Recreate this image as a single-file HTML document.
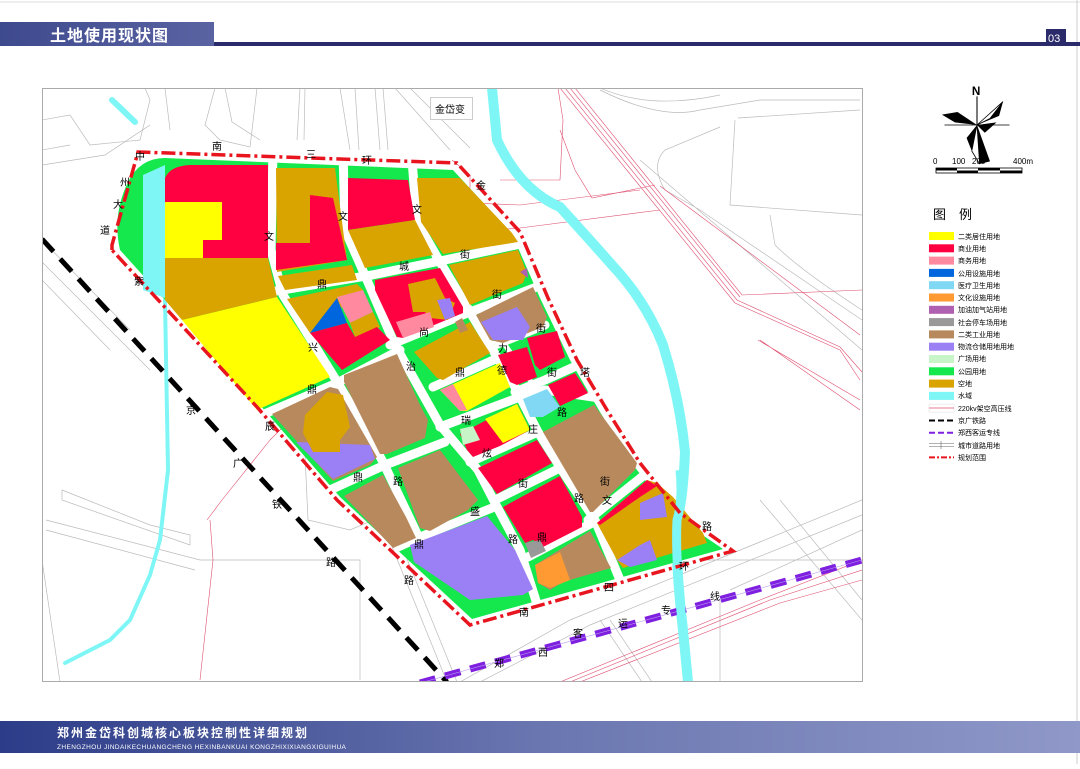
<!DOCTYPE html>
<html><head><meta charset="utf-8"><style>
html,body{margin:0;padding:0;background:#fff}
body{width:1080px;height:764px;overflow:hidden;position:relative;font-family:"Liberation Sans","Noto Sans CJK SC",sans-serif}
svg text{font-family:"Liberation Sans","Noto Sans CJK SC",sans-serif}
</style></head><body>
<svg width="1080" height="764" viewBox="0 0 1080 764" xmlns="http://www.w3.org/2000/svg">
<defs>
<linearGradient id="hd" x1="0" x2="1"><stop offset="0" stop-color="#3e4a8e"/><stop offset="1" stop-color="#5a63a2"/></linearGradient>
<linearGradient id="ft" x1="0" x2="1"><stop offset="0" stop-color="#2c3c88"/><stop offset="0.5" stop-color="#6a76b0"/><stop offset="1" stop-color="#8f98c8"/></linearGradient>
<clipPath id="mc"><rect x="43" y="89" width="819" height="592"/></clipPath>
</defs>
<line x1="0" y1="2" x2="1080" y2="2" stroke="#ddd" stroke-width="1"/>
<line x1="1077" y1="0" x2="1077" y2="764" stroke="#ccc" stroke-width="1"/>
<!-- header -->
<rect x="0" y="22" width="214" height="24" fill="url(#hd)"/>
<rect x="214" y="42" width="866" height="4" fill="#2b2b6b"/>
<text x="50" y="41" fill="#fff" font-size="16" font-weight="bold" letter-spacing="1">土地使用现状图</text>
<rect x="1046" y="29" width="20" height="16" fill="#2b2b6b"/>
<text x="1048" y="42" fill="#fff" font-size="11">03</text>

<!-- map frame -->
<rect x="42.5" y="88.5" width="820" height="593" fill="#fff" stroke="#aaa"/>
<g clip-path="url(#mc)">
<g fill="none" stroke="#bbb" stroke-width="0.7">
<path d="M42 120 L70 115 L90 145 L140 140 L150 100 L145 88"/>
<path d="M42 150 L70 145 M42 165 L105 155 L150 125"/>
<path d="M165 88 L170 130 M215 88 L205 125 L220 140 L250 147 L257 88 M225 88 L232 122 L260 140"/>
<path d="M300 88 L297 140 M305 88 L304 140 M340 88 L350 150 M355 88 L359 150 M375 88 L380 150 M383 88 L388 150"/>
<path d="M395 88 L450 150 M410 88 L470 148"/>
<path d="M600 90 Q660 120 700 110 L760 100 L860 100 M600 88 Q650 110 720 95 M735 120 L730 205 L862 215 M738 118 L860 110 M720 127 L665 150 Q650 165 665 190 L700 210 L862 320 M640 160 L862 350 M770 215 L775 245 Q800 270 862 310"/>
<path d="M42 240 L130 330 M42 262 L110 330 M42 280 L110 350"/>
<path d="M62 490 L150 525 L190 535 L190 545 L62 500 Z M46 520 L200 560 L360 560 L360 680 M46 530 L195 570 M305 455 L308 520 L350 530 L420 500 M110 330 L150 370"/>
<path d="M300 320 L447 682 M310 320 L457 682"/>
<path d="M460 682 L570 620 L862 500 M480 682 L590 625 L862 515 M600 620 L642 682 M610 620 L652 682 M700 560 L862 560 M720 600 L720 682 M730 590 L862 530"/>
<path d="M760 500 L862 620 M780 500 L862 600 M42 560 L60 682"/>
</g>
<g fill="none" stroke="#e05070" stroke-width="0.6">
<path d="M560 88 L735 303 L840 350 L860 380"/>
<path d="M565 88 L737 300 L840 347 L862 372"/>
<path d="M570 88 L740 297 M575 88 L742 295 L862 290"/>
<path d="M560 130 L575 170 L592 198 L655 185"/>
<path d="M660 186 L860 335 M760 340 L860 410 M758 340 L860 400"/>
<path d="M400 200 L520 205 L640 190 M430 235 L520 228 L660 210 M500 180 L560 180 L563 120 L558 88"/>
<path d="M270 440 L330 380 L380 290 L470 240 L470 175 L452 160"/>
<path d="M210 520 L213 560 L200 680 M207 520 L222 500 L270 440"/>
<path d="M560 682 L760 600 L862 560 M570 682 L770 600 L862 570 M580 682 L780 603 L862 580"/>
</g>
<g fill="none" stroke="#7ff6f6" stroke-linecap="round">
<path d="M492 88 L497 140 Q520 190 560 207 Q590 240 612 265 Q645 300 663 345 Q680 400 685 452 Q683 500 677 520 Q675 560 683 630 L688 682" stroke-width="10"/>
<path d="M112 100 L135 122" stroke-width="6"/>
<path d="M165 300 L168 470 L160 540 L150 575 L130 620 L110 640 L65 663" stroke-width="4"/>
</g>
<line x1="42" y1="239" x2="447" y2="682" stroke="#000" stroke-width="5" stroke-dasharray="17 10"/>
<line x1="420" y1="683" x2="862" y2="560" stroke="#7f1fe0" stroke-width="7" stroke-dasharray="16 10"/>
<line x1="420" y1="683" x2="862" y2="560" stroke="#b9a0ee" stroke-width="0.6"/>

<path d="M128 182 Q140 158 165 158 L453 170 L512 234 L540 298 L570 360 L600 412 L633 465 L673 515 L723 549 L472 619 L340 497 L260 405 L120 250 Q112 215 128 182 Z" fill="#14e84c"/>
<path d="M143 175 L165 165 L165 298 L143 290 Z" fill="#7ff6f6"/>
<g fill="none" stroke="#fff" stroke-width="9" stroke-linejoin="round" stroke-linecap="round">
<path d="M273 150 L271 250 L283 295 L305 330 L336 380 L360 420 L383 462 L420 540"/>
<path d="M343 150 L345 230 L367 280 L395 345 L440 425 L478 470 L495 503 L520 550 L542 620"/>
<path d="M412 160 L417 222 L440 262 L470 312 L515 387 L538 432 L565 475 L595 520 L620 580"/>
<path d="M270 292 L372 275 L445 260 L530 242"/>
<path d="M390 345 L470 312 L550 282"/>
<path d="M262 415 L337 383 L400 350"/>
<path d="M433 387 L498 358 M490 347 L545 325 M515 392 L545 380 L585 362"/>
<path d="M330 490 L385 465 L445 442"/>
<path d="M440 427 L520 397 L545 390 L600 398"/>
<path d="M470 462 L538 432 M495 500 L560 468 M588 520 L648 472 L662 472"/>
<path d="M398 547 L420 537 L492 508 M528 557 L592 523"/>
<path d="M505 345 L530 380" stroke-width="5"/>
</g>
<g stroke-linejoin="round">
<path d="M165 178 Q170 166 190 165 L268 165 L268 262 L165 262 Z" fill="#ff0040"/>
<path d="M165 202 L222 202 L222 240 L203 240 L203 258 L165 258 Z" fill="#ffff00"/>
<path d="M165 258 L268 258 L277 297 L182 320 L165 300 Z" fill="#d9a300"/>
<path d="M182 320 L277 297 L330 377 L257 410 Z" fill="#ffff00"/>
<path d="M276 168 L335 168 L347 260 L277 272 Z" fill="#d9a300"/>
<path d="M276 243 L310 243 L310 195 L333 198 L347 260 L276 270 Z" fill="#ff0040"/>
<path d="M278 276 L352 265 L357 280 L285 290 Z" fill="#d9a300"/>
<path d="M348 178 L408 180 L415 220 L348 230 Z" fill="#ff0040"/>
<path d="M348 230 L415 220 L433 255 L365 268 Z" fill="#d9a300"/>
<path d="M417 178 L460 178 L512 233 L518 242 L443 254 L421 222 Z" fill="#d9a300"/>
<path d="M375 280 L440 268 L463 307 L463 313 L403 338 L397 337 L375 290 Z" fill="#ff0040"/>
<path d="M408 284 L435 278 L445 298 L455 303 L448 320 L430 318 L425 312 L413 312 Z" fill="#d9a300"/>
<path d="M437 300 L450 298 L455 316 L445 320 Z" fill="#9b7ff5"/>
<path d="M396 322 L430 312 L434 327 L403 338 Z" fill="#ff8aa0"/>
<path d="M449 265 L518 250 L527 273 L523 283 L470 305 Z" fill="#d9a300"/>
<path d="M520 272 L527 268 L528 278 Z" fill="#b060b0"/>
<path d="M476 315 L533 287 L547 317 L543 327 L503 343 L490 340 Z" fill="#b8895c"/>
<path d="M481 322 L517 307 L530 327 L523 340 L493 340 Z" fill="#9b7ff5"/>
<path d="M287 299 L357 284 L363 290 L310 333 Z" fill="#d9a300"/>
<path d="M310 333 L337 298 L347 323 Z" fill="#0066dd"/>
<path d="M337 297 L363 290 L373 312 L350 323 Z" fill="#ff8aa0"/>
<path d="M350 323 L373 312 L380 327 L363 337 L355 337 Z" fill="#d9a300"/>
<path d="M310 333 L347 323 L355 337 L377 327 L390 340 L342 370 Z" fill="#ff0040"/>
<path d="M344 375 L397 354 L420 405 L428 420 L425 438 L387 454 L380 454 L344 382 Z" fill="#b8895c"/>
<path d="M272 414 L330 387 L338 389 L377 457 L370 465 L333 481 Z" fill="#b8895c"/>
<path d="M296 442 L370 445 L375 459 L333 479 Z" fill="#9b7ff5"/>
<path d="M305 415 L327 392 L343 395 L350 427 L340 440 L340 452 L313 452 L303 433 Z" fill="#d9a300"/>
<path d="M414 352 L470 322 L490 353 L443 380 L437 378 Z" fill="#d9a300"/>
<path d="M455 322 L462 318 L468 330 L460 333 Z" fill="#b8895c"/>
<path d="M440 390 L500 363 L510 387 L467 411 L460 411 Z" fill="#ffff00"/>
<path d="M440 390 L453 384 L467 410 L460 411 Z" fill="#ff8aa0"/>
<path d="M498 355 L527 347 L537 377 L517 385 L510 382 Z" fill="#ff0040"/>
<path d="M527 338 L557 331 L565 357 L540 370 L535 365 Z" fill="#ff0040"/>
<path d="M548 385 L575 373 L588 393 L560 406 Z" fill="#ff0040"/>
<path d="M523 399 L547 389 L560 407 L543 417 L530 417 Z" fill="#80d8f5"/>
<path d="M460 434 L517 404 L530 430 L500 446 L490 450 L473 457 L467 450 Z" fill="#ff0040"/>
<path d="M485 419 L517 404 L530 430 L503 443 Z" fill="#ffff00"/>
<path d="M460 429 L473 426 L480 440 L463 445 Z" fill="#c8f5c8"/>
<path d="M478 468 L537 440 L552 463 L497 494 Z" fill="#ff0040"/>
<path d="M543 432 L594 405 L637 463 L635 470 L593 512 L590 512 Z" fill="#b8895c"/>
<path d="M503 507 L560 476 L582 517 L582 527 L543 547 L533 540 L525 543 Z" fill="#ff0040"/>
<path d="M525 543 L540 540 L546 551 L531 558 Z" fill="#999"/>
<path d="M535 565 L590 531 L611 568 L563 582 L550 590 L538 583 Z" fill="#b8895c"/>
<path d="M535 565 L560 552 L570 580 L550 588 L538 583 Z" fill="#ff9a33"/>
<path d="M597 523 L647 480 L657 483 L673 497 L703 533 L707 543 L623 568 L617 560 Z" fill="#d9a300"/>
<path d="M597 523 L647 480 L657 486 L640 497 L600 525 Z" fill="#ff0040"/>
<path d="M640 503 L663 493 L667 517 L640 520 Z" fill="#9b7ff5"/>
<path d="M617 560 L640 545 L650 540 L657 560 L630 567 Z" fill="#9b7ff5"/>
<path d="M344 496 L383 475 L406 517 L416 538 L393 548 Z" fill="#b8895c"/>
<path d="M398 468 L440 450 L478 500 L468 510 L430 531 L420 528 Z" fill="#b8895c"/>
<path d="M410 545 L487 516 L515 550 L533 589 L523 595 L470 600 L414 562 Z" fill="#9b7ff5"/>
</g>
<path d="M680 470 Q683 500 677 520 Q675 560 683 630" fill="none" stroke="#7ff6f6" stroke-width="9"/>
<path d="M112 250 L112 245 L138 152 L457 163 L520 232 L548 298 L577 360 L607 410 L640 463 L680 513 L733 551 L470 625 L337 500 L257 407 Z" fill="none" stroke="#e8141e" stroke-width="3.5" stroke-dasharray="14 4 3 4"/>
<g font-size="10" fill="#000">
<text x="212" y="150">南</text><text x="306" y="158">三</text><text x="362" y="164">环</text><text x="476" y="189">金</text>
<text x="135" y="160">中</text><text x="120" y="186">州</text><text x="113" y="208">大</text><text x="100" y="234">道</text><text x="134" y="285">紫</text>
<text x="264" y="240">文</text><text x="338" y="220">文</text><text x="412" y="213">文</text>
<text x="317" y="288">鼎</text><text x="399" y="270">城</text><text x="460" y="258">街</text><text x="492" y="298">街</text><text x="536" y="332">街</text>
<text x="419" y="336">尚</text><text x="308" y="351">兴</text><text x="406" y="370">治</text><text x="455" y="376">鼎</text><text x="498" y="352">力</text><text x="497" y="374">德</text><text x="547" y="376">街</text><text x="580" y="376">塔</text>
<text x="307" y="393">鼎</text><text x="265" y="430">辰</text><text x="461" y="424">瑞</text><text x="528" y="433">庄</text><text x="557" y="416">路</text>
<text x="482" y="457">炫</text><text x="353" y="481">鼎</text><text x="393" y="485">路</text><text x="518" y="487">街</text>
<text x="600" y="485">街</text><text x="574" y="502">路</text><text x="602" y="504">文</text><text x="470" y="515">盛</text>
<text x="508" y="543">路</text><text x="537" y="541">鼎</text><text x="414" y="548">鼎</text><text x="404" y="584">路</text><text x="702" y="530">路</text>
<text x="679" y="570">环</text><text x="604" y="591">四</text><text x="519" y="616">南</text>
<text x="186" y="414">京</text><text x="233" y="467">广</text><text x="272" y="508">铁</text><text x="326" y="566">路</text>
<text x="494" y="667">郑</text><text x="538" y="656">西</text><text x="573" y="637">客</text><text x="618" y="627">运</text><text x="661" y="614">专</text><text x="710" y="600">线</text>
</g>
<rect x="430.5" y="97.5" width="42" height="22" fill="#fff" stroke="#ccc"/>
<text x="435" y="113" font-size="10">金岱变</text>
</g>

<!-- compass -->
<g transform="translate(977,125) scale(1.3)">
<text x="-4" y="-23" font-size="9" font-weight="bold">N</text>
<line x1="0" y1="-22" x2="0" y2="10" stroke="#000" stroke-width="0.8"/>
<line x1="-25" y1="0" x2="25" y2="0" stroke="#000" stroke-width="0.6"/>
<path d="M0 0 L-27 -8 L-17 -2 Z M0 0 L-15 -10 L-27 -8 Z" fill="#000"/>
<path d="M0 0 L20 -18 L17 -7 Z" fill="#000"/><path d="M0 0 L20 -18 L10 -5 Z" fill="#fff" stroke="#000" stroke-width="0.6"/>
<path d="M0 0 L2 30 L10 28 Z" fill="#000"/><path d="M0 0 L-4 20 L2 30 Z" fill="#fff" stroke="#000" stroke-width="0.6"/>
<path d="M0 0 L-8 10 L-4 20 Z" fill="#000"/>
<path d="M0 0 L15 -2 L6 6 Z" fill="#000"/>
</g>
<g font-size="8">
<text x="933" y="164">0</text><text x="952" y="164">100</text><text x="972" y="164">200</text><text x="1013" y="164">400m</text>
</g>
<rect x="936" y="168" width="86" height="5" fill="#fff" stroke="#000" stroke-width="0.8"/>
<rect x="936" y="168" width="21" height="2.5" fill="#000"/><rect x="957" y="170.5" width="21" height="2.5" fill="#000"/><rect x="978" y="168" width="22" height="2.5" fill="#000"/><rect x="1000" y="170.5" width="22" height="2.5" fill="#000"/>
<text x="933" y="219" font-size="13">图　例</text>
<g font-size="7">
<rect x="929" y="232" width="25" height="8" fill="#ffff00"/><text x="958" y="239">二类居住用地</text>
<rect x="929" y="244.3" width="25" height="8" fill="#ff0040"/><text x="958" y="251">商业用地</text>
<rect x="929" y="256.6" width="25" height="8" fill="#ff8aa0"/><text x="958" y="263">商务用地</text>
<rect x="929" y="268.9" width="25" height="8" fill="#0066dd"/><text x="958" y="276">公用设施用地</text>
<rect x="929" y="281.2" width="25" height="8" fill="#80d8f5"/><text x="958" y="288">医疗卫生用地</text>
<rect x="929" y="293.5" width="25" height="8" fill="#ff9a33"/><text x="958" y="300">文化设施用地</text>
<rect x="929" y="305.8" width="25" height="8" fill="#b060b0"/><text x="958" y="312">加油加气站用地</text>
<rect x="929" y="318.1" width="25" height="8" fill="#999"/><text x="958" y="325">社会停车场用地</text>
<rect x="929" y="330.4" width="25" height="8" fill="#b8895c"/><text x="958" y="337">二类工业用地</text>
<rect x="929" y="342.7" width="25" height="8" fill="#9b7ff5"/><text x="958" y="349">物流仓储用地用地</text>
<rect x="929" y="355" width="25" height="8" fill="#c8f5c8"/><text x="958" y="361">广场用地</text>
<rect x="929" y="367.3" width="25" height="8" fill="#14e84c"/><text x="958" y="374">公园用地</text>
<rect x="929" y="379.6" width="25" height="8" fill="#d9a300"/><text x="958" y="386">空地</text>
<rect x="929" y="391.9" width="25" height="8" fill="#7ff6f6"/><text x="958" y="398">水域</text>
<rect x="929" y="404.2" width="25" height="8" fill="#fff" stroke="#eee"/><line x1="929" y1="408" x2="954" y2="408" stroke="#e05070" stroke-width="0.7"/><text x="958" y="411">220kv架空高压线</text>
<line x1="929" y1="420.5" x2="954" y2="420.5" stroke="#000" stroke-width="2" stroke-dasharray="6 3"/><text x="958" y="423">京广铁路</text>
<line x1="929" y1="432.8" x2="954" y2="432.8" stroke="#7f1fe0" stroke-width="2" stroke-dasharray="6 3"/><text x="958" y="435">郑西客运专线</text>
<line x1="929" y1="443.5" x2="954" y2="443.5" stroke="#666" stroke-width="0.6"/><line x1="929" y1="446.5" x2="954" y2="446.5" stroke="#666" stroke-width="0.6"/><line x1="941" y1="441" x2="941" y2="449" stroke="#666" stroke-width="0.6"/><text x="958" y="448">城市道路用地</text>
<line x1="929" y1="457.4" x2="954" y2="457.4" stroke="#e8141e" stroke-width="2" stroke-dasharray="6 2 2 2"/><text x="958" y="460">规划范围</text>
</g>

<rect x="0" y="721" width="1080" height="32" fill="url(#ft)"/>
<text x="57" y="737" fill="#fff" font-size="12" font-weight="bold" letter-spacing="2">郑州金岱科创城核心板块控制性详细规划</text>
<text x="57" y="749" fill="#fff" font-size="6.5" letter-spacing="0.4">ZHENGZHOU  JINDAIKECHUANGCHENG  HEXINBANKUAI  KONGZHIXIXIANGXIGUIHUA</text>
</svg>
</body></html>
